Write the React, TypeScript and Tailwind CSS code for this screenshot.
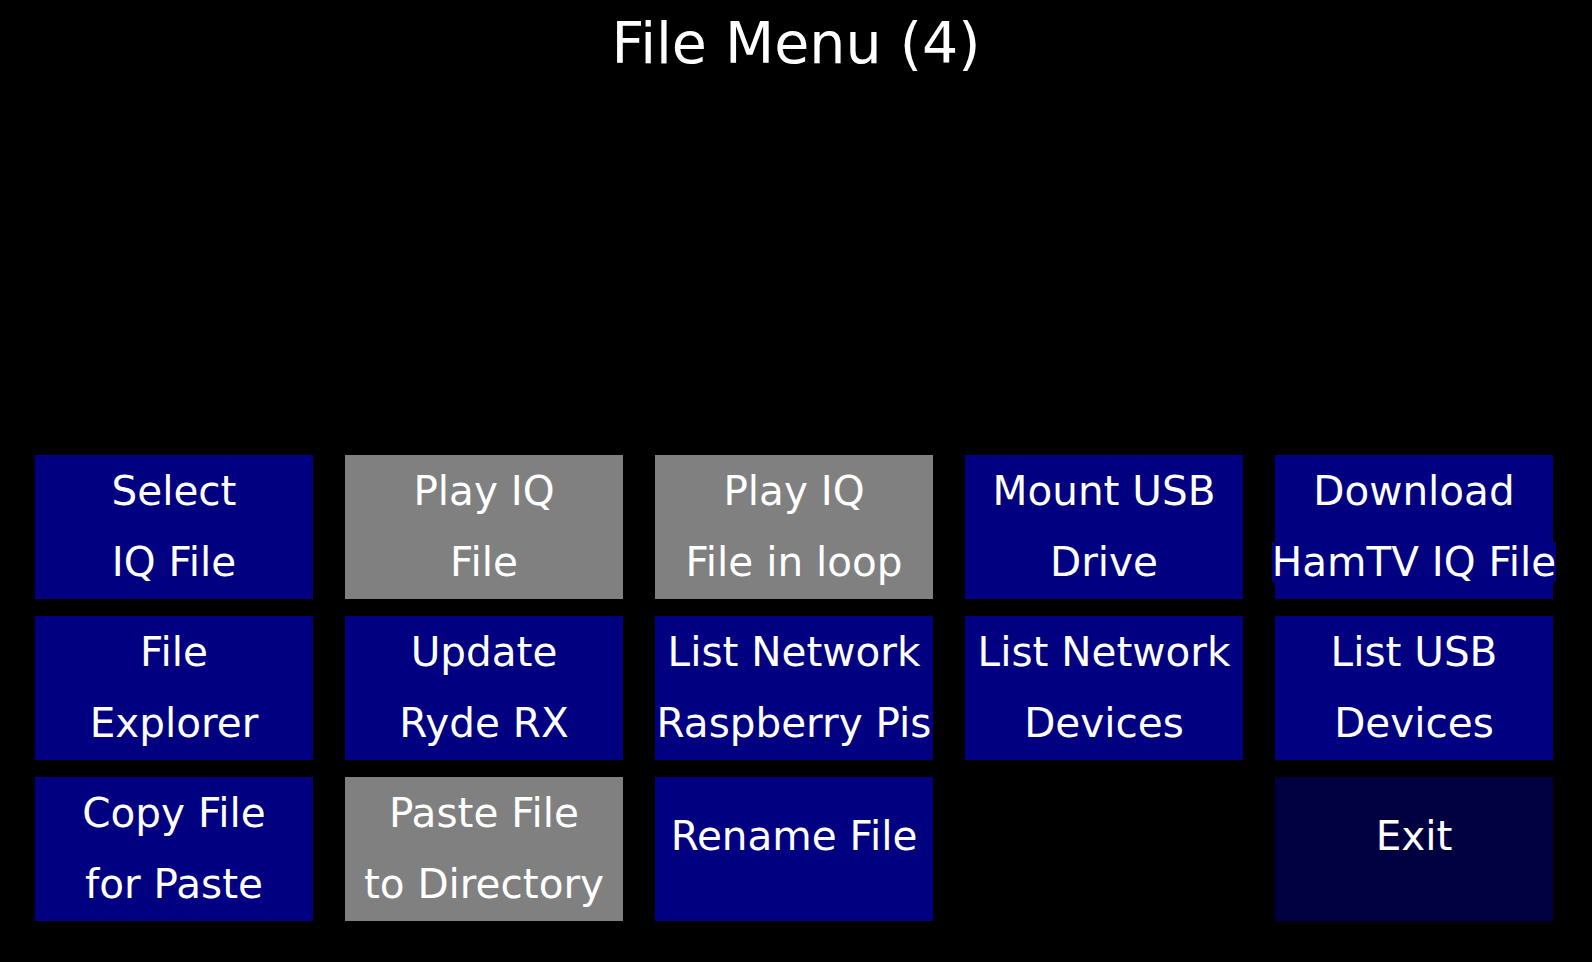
type Btn = { lines: string[]; tone: 'blue' | 'grey' | 'dark' } | null;

const buttons: Btn[] = [
  { lines: ['Select', 'IQ File'], tone: 'blue' },
  { lines: ['Play IQ', 'File'], tone: 'grey' },
  { lines: ['Play IQ', 'File in loop'], tone: 'grey' },
  { lines: ['Mount USB', 'Drive'], tone: 'blue' },
  { lines: ['Download', 'HamTV IQ File'], tone: 'blue' },
  { lines: ['File', 'Explorer'], tone: 'blue' },
  { lines: ['Update', 'Ryde RX'], tone: 'blue' },
  { lines: ['List Network', 'Raspberry Pis'], tone: 'blue' },
  { lines: ['List Network', 'Devices'], tone: 'blue' },
  { lines: ['List USB', 'Devices'], tone: 'blue' },
  { lines: ['Copy File', 'for Paste'], tone: 'blue' },
  { lines: ['Paste File', 'to Directory'], tone: 'grey' },
  { lines: ['Rename File'], tone: 'blue' },
  null,
  { lines: ['Exit'], tone: 'dark' },
];

const toneBg = {
  blue: 'bg-[#000080]',
  grey: 'bg-[#808080]',
  dark: 'bg-[#000040]',
};

function MenuButton({ btn }: { btn: Btn }) {
  if (!btn) return <div className="h-[144px]" />;
  const bg = toneBg[btn.tone];
  return (
    <div
      className={`h-[144px] ${bg} flex flex-col justify-center ${
        btn.lines.length === 1 ? 'pb-[27px]' : 'pb-[2px]'
      }`}
    >
      {btn.lines.map((line, i) => (
        <div key={i} className="h-[71px] shrink-0 flex items-center justify-center">
          <span className={`inline-block whitespace-nowrap leading-[40px] ${bg}`}>{line}</span>
        </div>
      ))}
    </div>
  );
}

export default function App() {
  return (
    <div
      className="w-[1592px] h-[962px] bg-black text-white overflow-hidden"
      style={{ fontFamily: '"DejaVu Sans", "Liberation Sans", sans-serif' }}
    >
      {/* Title */}
      <div className="pt-[15px] text-center text-[57px] leading-[57px]">File Menu (4)</div>

      {/* Buttons */}
      <div className="mt-[383px] pl-[35px] grid grid-cols-[repeat(5,278px)] gap-x-[32px] gap-y-[17px] text-[40.5px]">
        {buttons.map((b, i) => (
          <MenuButton key={i} btn={b} />
        ))}
      </div>
    </div>
  );
}
